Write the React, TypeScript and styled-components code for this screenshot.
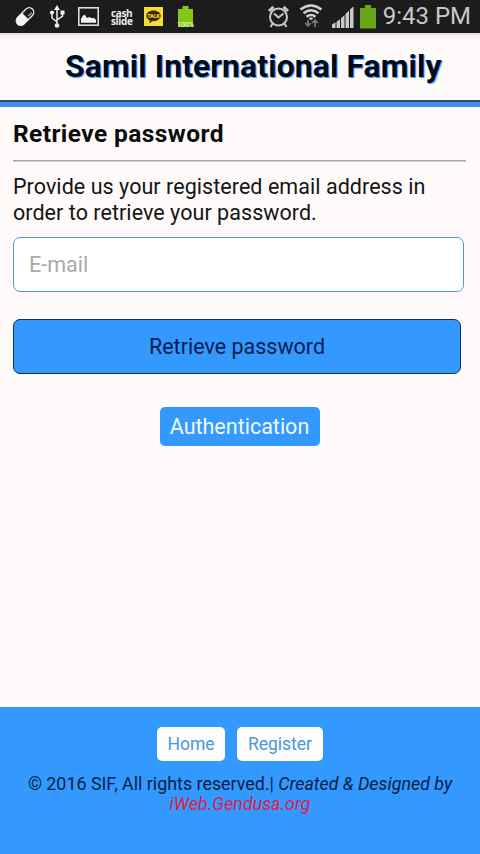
import React from "react";
import styled, { createGlobalStyle } from "styled-components";

const GlobalStyle = createGlobalStyle`
  * { box-sizing: border-box; }
  html, body { margin: 0; padding: 0; background: #fefaf9; }
  body { font-family: Roboto, "Liberation Sans", sans-serif; color: #151515; }
`;

const Screen = styled.div`
  width: 480px;
  height: 854px;
  display: flex;
  flex-direction: column;
  overflow: hidden;
  background: #fefaf9;
`;

const StatusBar = styled.div`
  height: 33px;
  flex: none;
  display: flex;
  justify-content: space-between;
  padding: 0 9px 0 14px;
  background: #1c1c1c;
`;

const IconGroup = styled.div<{ $gap: number }>`
  display: flex;
  align-items: flex-start;
  gap: ${(p) => p.$gap}px;
`;

const Glyph = styled.svg`
  display: block;
  flex: none;
  height: 33px;
`;

const CashSlide = styled.span`
  width: 21px;
  padding-top: 9px;
  font: 700 10px/8px "Open Sans", sans-serif;
  letter-spacing: -0.35px;
  color: #eee;
`;

const Clock = styled.span`
  font-size: 24px;
  line-height: 33px;
  color: #c9c9c9;
  white-space: nowrap;
`;

const Header = styled.header`
  height: 74px;
  flex: none;
  padding: 0 38px 0 65px;
  background: linear-gradient(#dddad9 0, #f4f1f0 3px, #fefaf9 9px);
  border-bottom: 5px solid #4090ee;
  box-shadow: inset 0 -2px 0 #25506f;
`;

const Title = styled.h1`
  margin: 0;
  font-size: 32px;
  line-height: 66px;
  letter-spacing: 0.05px;
  color: #020b18;
  text-shadow: 1px 1px 1px #3399ff;
  white-space: nowrap;
`;

const Main = styled.main`
  flex: 1;
  display: flex;
  flex-direction: column;
  padding: 13px 14px 0 13px;
`;

const Heading = styled.h2`
  margin: 0;
  font-size: 24.5px;
  line-height: 28px;
  letter-spacing: 0.42px;
  color: #0c0c0c;
`;

const Rule = styled.hr`
  width: 100%;
  height: 2px;
  margin: 12px 0 0;
  border: 0;
  border-top: 1px solid #aaa7a6;
  border-bottom: 1px solid #cdcaca;
`;

const Intro = styled.p`
  margin: 12px 0 0;
  font-size: 21.5px;
  line-height: 25.5px;
  letter-spacing: 0.05px;
  white-space: nowrap;
`;

const EmailInput = styled.input`
  width: 451px;
  height: 55px;
  margin-top: 12px;
  padding: 0 15px;
  font: 21.5px Roboto, sans-serif;
  background: #fff;
  border: 1.5px solid #4a9bd8;
  border-radius: 7px;
  outline: none;
  &::placeholder { color: #aaa; opacity: 1; }
`;

const SubmitButton = styled.button`
  width: 448px;
  height: 55px;
  margin-top: 27px;
  padding: 0;
  font: 21.5px Roboto, sans-serif;
  color: #06204a;
  background: #3399ff;
  border: 1.5px solid #12304f;
  border-radius: 7px;
`;

const AuthLink = styled.a`
  align-self: center;
  width: 160px;
  height: 39px;
  margin-top: 33px;
  font-size: 21.5px;
  line-height: 39px;
  text-align: center;
  color: #f0faff;
  background: #3399ff;
  border-radius: 5px;
`;

const Footer = styled.footer`
  height: 147px;
  flex: none;
  padding-top: 20px;
  background: #3399ff;
  text-align: center;
`;

const FooterNav = styled.nav`
  display: flex;
  justify-content: center;
  gap: 12px;
`;

const NavLink = styled.a<{ $width: number }>`
  width: ${(p) => p.$width}px;
  height: 34px;
  font-size: 17.5px;
  line-height: 34px;
  color: #4599dc;
  background: #fefcfb;
  border-radius: 5px;
`;

const Copyright = styled.p`
  margin: 13px 0 0;
  font-size: 17.85px;
  line-height: 20px;
  color: #061f45;
  white-space: nowrap;
`;

const Site = styled.span`
  color: #e02045;
`;

const PillIcon = () => (
  <Glyph width="23" viewBox="14 0 23 33">
    <g transform="rotate(45 25 16.5)">
      <rect x="20.5" y="6" width="9" height="21" rx="4.5" fill="none" stroke="#eee" strokeWidth="1.3" />
      <path d="M20.5 16h9v6.500a4.500 4.500 0 0 1-9 0z" fill="#f4f4f4" />
      <path d="M27 9v5" stroke="#bbb" strokeWidth="1.3" />
    </g>
  </Glyph>
);

const UsbIcon = () => (
  <Glyph width="17" viewBox="49 0 17 33">
    <g fill="none" stroke="#eee" strokeWidth="1.5">
      <path d="M57 8v17M57 22l-5-4v-5M57 20l5.500-4v-4" />
    </g>
    <path d="M57 5l-3 5h6z" fill="#eee" />
    <circle cx="57" cy="25.500" r="2.300" fill="#eee" />
    <circle cx="52" cy="12.500" r="2.100" fill="#eee" />
    <path d="M60.500 10.500h4v4h-4z" fill="#eee" />
  </Glyph>
);

const PictureIcon = () => (
  <Glyph width="21" viewBox="78 0 21 33">
    <rect x="78.800" y="7.800" width="19.400" height="17.400" fill="none" stroke="#ddd" strokeWidth="1.600" />
    <path d="M81 22.800v-4l2-3 1.500-1.300 2.500 3.500 2.500-1 2 1.300 2-.5 2.500 2v3z" fill="#f4f4f4" />
  </Glyph>
);

const TalkIcon = () => (
  <Glyph width="20" viewBox="143 0 20 33">
    <rect x="143" y="7" width="19" height="19" fill="#f4dd35" />
    <path d="M152.500 10.500c-4.200 0-7.200 2.300-7.200 5.300 0 2 1.400 3.700 3.500 4.600l-.5 3 3.100-2.300c4.700.3 8.300-2.100 8.300-5.300 0-3-3-5.300-7.200-5.300z" fill="#40280d" />
    <text x="152.500" y="18" fontSize="5" fontWeight="900" textAnchor="middle" fill="#f4dd35">TALK</text>
  </Glyph>
);

const ChargeIcon = () => (
  <Glyph width="20" viewBox="175 0 20 33">
    <path d="M181.500 6h6v3h4.500v18h-15V9h4.500z" fill="#83c814" />
    <text x="184.600" y="26.600" fontSize="7.200" textAnchor="middle" fill="#efffdc">100%</text>
  </Glyph>
);

const AlarmIcon = () => (
  <Glyph width="26" viewBox="267 0 26 33">
    <g fill="none" stroke="#c8c8c8" strokeWidth="2">
      <circle cx="278.500" cy="17" r="8.500" />
      <path d="M274 13.500l4.500 4 5-4" />
      <path d="M269 11l4.500-4.200M288 11l-4.500-4.200" strokeWidth="3" />
      <path d="M273 23l-2.500 4M284 23l2.500 4" />
    </g>
  </Glyph>
);

const WifiIcon = () => (
  <Glyph width="27" viewBox="299 0 27 33">
    <g fill="none" stroke="#d0d0d0" strokeWidth="2.500">
      <path d="M300.500 9.500q10.500-8 21 0" />
      <path d="M303.500 13.300q7.500-6 15 0" />
      <path d="M306.500 16.800q4.500-3.500 9 0" />
    </g>
    <path d="M308.500 18.300q2.500-1.500 5 0l-2.500 2z" fill="#d0d0d0" />
    <path d="M308 20v5.500M305.200 23l2.800 3 2.800-3M315 27v-6M312.200 23l2.800-3 2.800 3" fill="none" stroke="#777" strokeWidth="1.800" />
  </Glyph>
);

const SignalIcon = () => (
  <Glyph width="22" viewBox="332 0 22 33">
    <path d="M332 28v-3.500l3.500-2.300V28zM336.500 28v-6.300l3.500-2.500V28zM341 28v-9.800l3.500-3.200V28zM345.500 28V14l3.500-3.500V28zM350 28V9.500l3.500-3v21.500z" fill="#cacaca" />
  </Glyph>
);

const BatteryIcon = () => (
  <Glyph width="17" viewBox="360 0 17 33">
    <path d="M365 5h6v3h5v20.500h-16V8h5z" fill="#66a516" />
  </Glyph>
);

export default function App() {
  return (
    <Screen>
      <GlobalStyle />
      <StatusBar>
        <IconGroup $gap={12}>
          <PillIcon />
          <UsbIcon />
          <PictureIcon />
          <CashSlide>cash<br />slide</CashSlide>
          <TalkIcon />
          <ChargeIcon />
        </IconGroup>
        <IconGroup $gap={6}>
          <AlarmIcon />
          <WifiIcon />
          <SignalIcon />
          <BatteryIcon />
          <Clock>9:43 PM</Clock>
        </IconGroup>
      </StatusBar>
      <Header>
        <Title>Samil International Family</Title>
      </Header>
      <Main>
        <Heading>Retrieve password</Heading>
        <Rule />
        <Intro>
          Provide us your registered email address in
          <br />
          order to retrieve your password.
        </Intro>
        <EmailInput type="email" placeholder="E-mail" />
        <SubmitButton type="button">Retrieve password</SubmitButton>
        <AuthLink>Authentication</AuthLink>
      </Main>
      <Footer>
        <FooterNav>
          <NavLink $width={68}>Home</NavLink>
          <NavLink $width={86}>Register</NavLink>
        </FooterNav>
        <Copyright>
          © 2016 SIF, All rights reserved.|{" "}
          <em>
            Created &amp; Designed by
            <br />
            <Site>iWeb.Gendusa.org</Site>
          </em>
        </Copyright>
      </Footer>
    </Screen>
  );
}
